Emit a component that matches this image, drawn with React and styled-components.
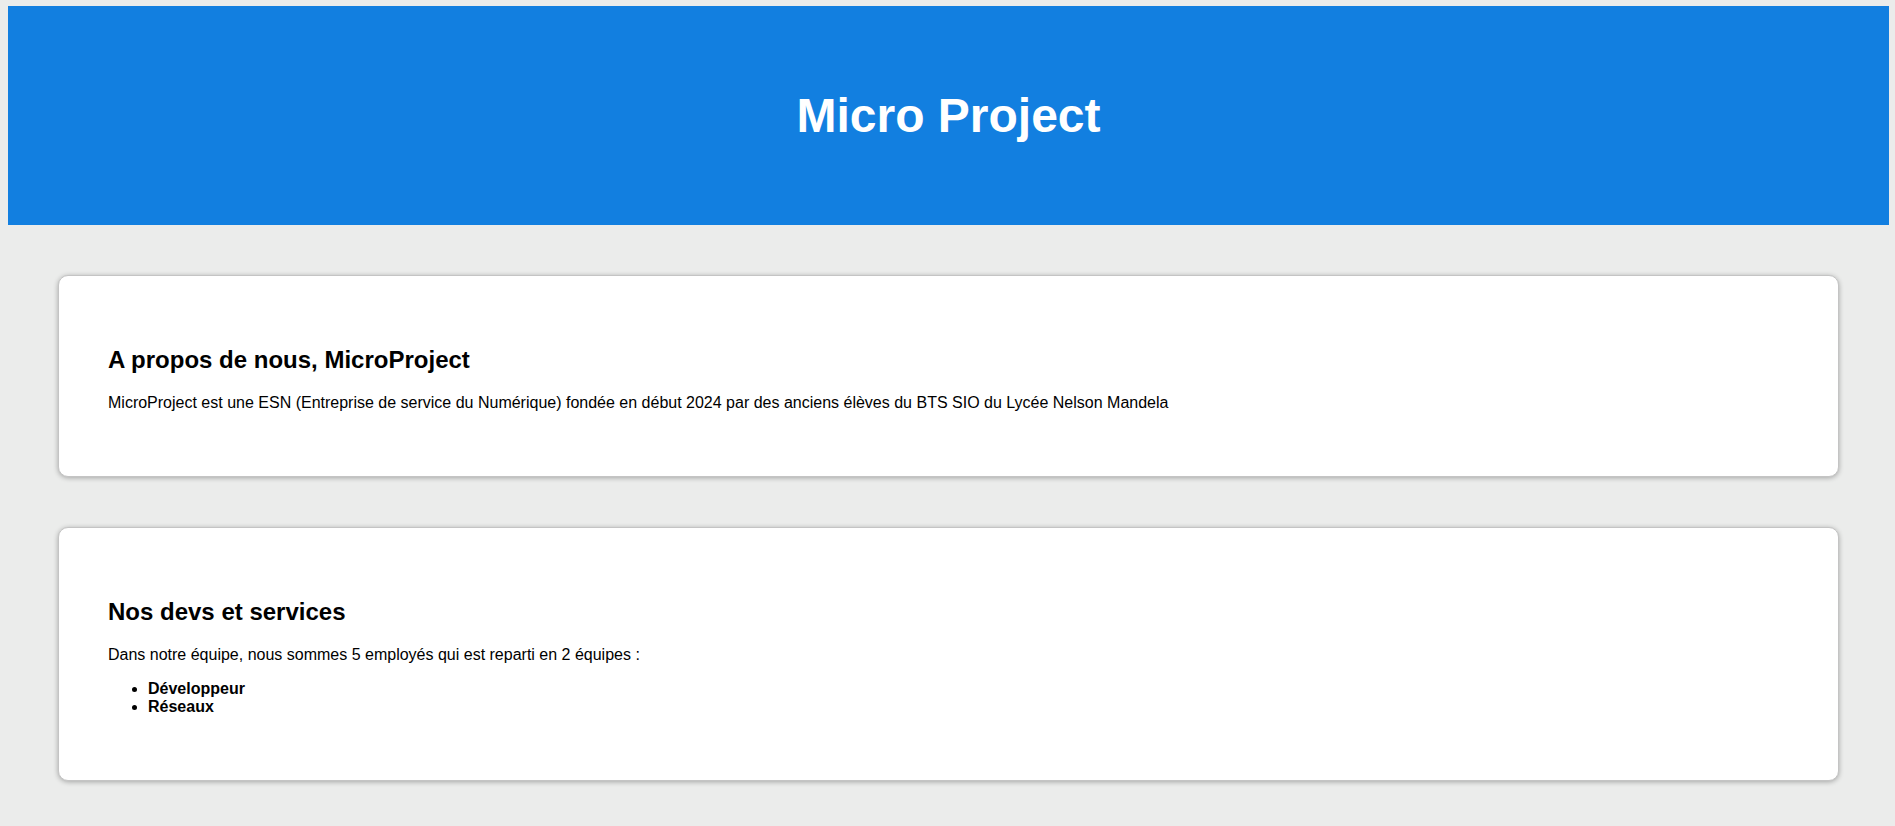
import React from 'react';
import styled, { createGlobalStyle } from 'styled-components';

const GlobalStyle = createGlobalStyle`
  html {
    background: #ebeceb;
  }

  body {
    margin: 6px 6px 0 8px;
    background: #ebeceb;
    font-family: 'Liberation Sans', Arial, sans-serif;
    color: #000;
  }
`;

const Header = styled.header`
  background: #127fe0;
  padding: 50px 0;
  text-align: center;
`;

const Title = styled.h1`
  margin: 32px 0;
  font-size: 48px;
  font-weight: 700;
  color: #fff;
`;

const Main = styled.main`
  display: flex;
  flex-direction: column;
  gap: 50px;
  padding: 50px 50px 48px 50px;
`;

const Card = styled.section`
  background: #fff;
  border: 1px solid #c4c4c4;
  border-radius: 10px;
  box-shadow: 0 1px 5px rgba(0, 0, 0, 0.3);
  padding: 50px 49px 48px;
`;

const CardTitle = styled.h2`
  margin: 20px 0;
  font-size: 24px;
  font-weight: 700;
`;

const Text = styled.p`
  margin: 16px 0;
  font-size: 16px;
`;

const List = styled.ul`
  margin: 16px 0;
  padding-left: 40px;
  font-size: 16px;
  font-weight: 700;
`;

const App = () => {
  return (
    <>
      <GlobalStyle />
      <Header>
        <Title>Micro Project</Title>
      </Header>
      <Main>
        <Card>
          <CardTitle>A propos de nous, MicroProject</CardTitle>
          <Text>
            MicroProject est une ESN (Entreprise de service du Numérique) fondée en début 2024 par des
            anciens élèves du BTS SIO du Lycée Nelson Mandela
          </Text>
        </Card>
        <Card>
          <CardTitle>Nos devs et services</CardTitle>
          <Text>Dans notre équipe, nous sommes 5 employés qui est reparti en 2 équipes :</Text>
          <List>
            <li>Développeur</li>
            <li>Réseaux</li>
          </List>
        </Card>
      </Main>
    </>
  );
};

export default App;
